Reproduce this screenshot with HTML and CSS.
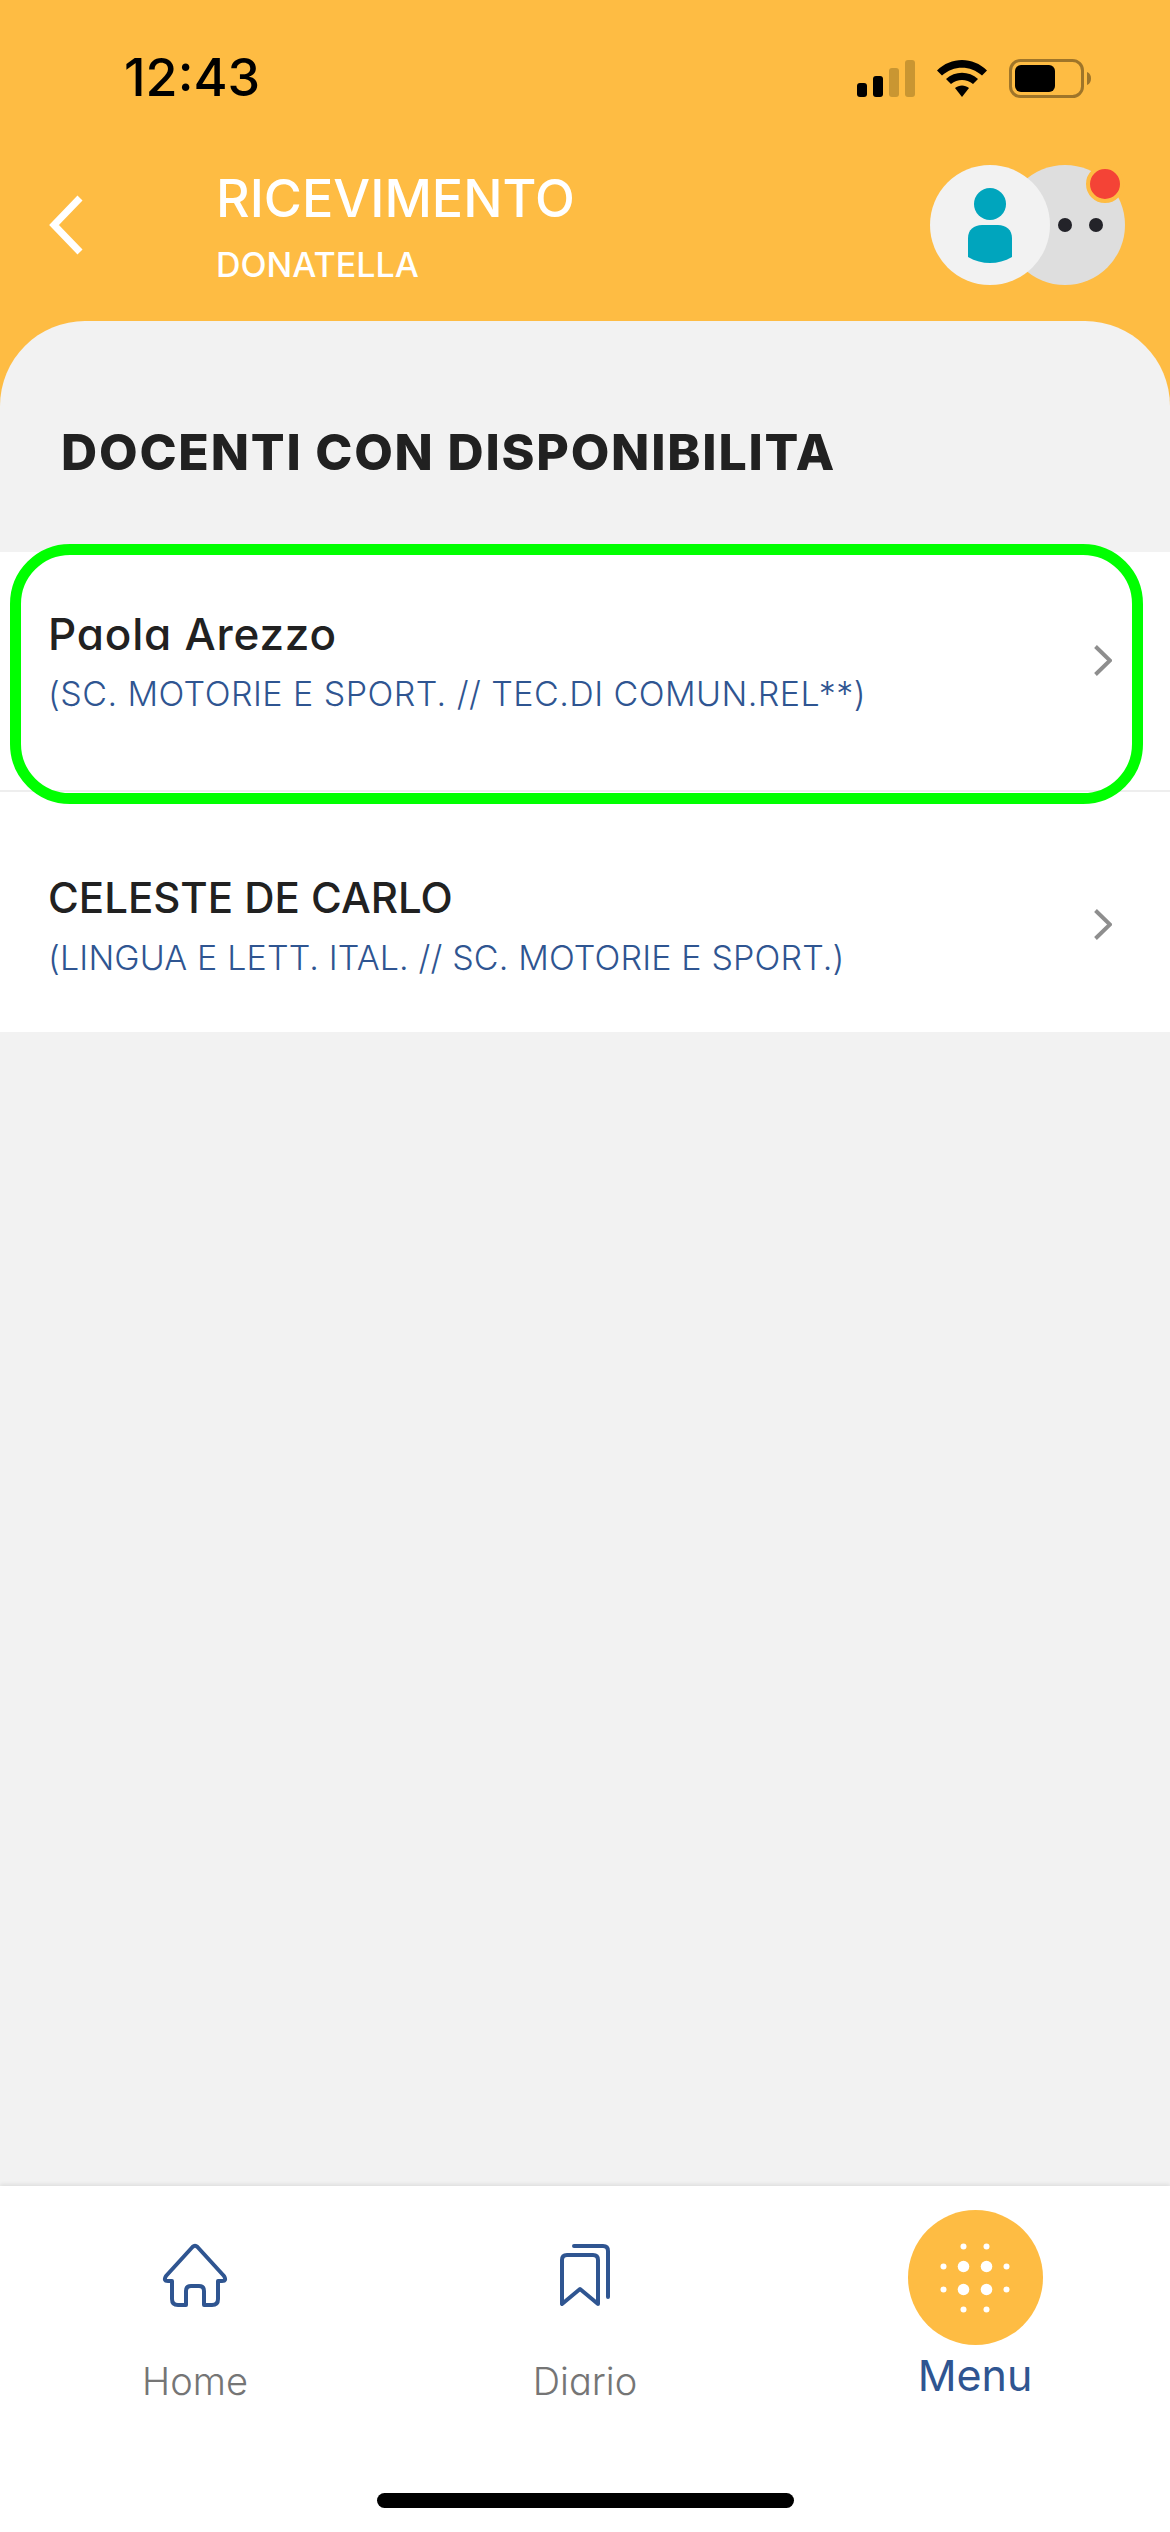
FILE: index.html
```html
<!DOCTYPE html>
<html lang="it">
<head>
    <meta charset="UTF-8">
    <meta name="viewport" content="width=device-width, initial-scale=1.0">
    <title>Ricevimento</title>
    <link rel="stylesheet" href="styles.css">
</head>
<body>
    <div class="app">
        <header class="top">
            <!-- Status bar -->
            <div class="status">
                <span class="time">12:43</span>
                <div class="status-icons">
                    <svg width="58" height="37" viewBox="0 0 58 37">
                        <rect x="0" y="23" width="10" height="14" rx="3" fill="#000"/>
                        <rect x="16" y="16" width="10" height="21" rx="3" fill="#000"/>
                        <rect x="32" y="8" width="10" height="29" rx="3" fill="#c99632"/>
                        <rect x="48" y="0" width="10" height="37" rx="3" fill="#c99632"/>
                    </svg>
                    <svg width="50" height="37" viewBox="0 0 50 37">
                        <path d="M0 10.5 C14 -3.5 36 -3.5 50 10.5 L45 15.5 C33.500 5 16.500 5 5 15.500 Z" fill="#000"/>
                        <path d="M9 19 C18 10.500 32 10.500 41 19 L36 24 C29.500 18.500 20.500 18.500 14 24 Z" fill="#000"/>
                        <path d="M18 28 C22 24.500 28 24.500 32 28 L25 37 Z" fill="#000"/>
                    </svg>
                    <svg width="82" height="39" viewBox="0 0 82 39">
                        <rect x="1.500" y="1.500" width="72" height="36" rx="10" fill="none" stroke="#9f7529" stroke-width="3"/>
                        <rect x="6" y="6" width="40" height="27" rx="6" fill="#000"/>
                        <path d="M78 13 C81 14 82 17 82 19.500 C82 22 81 25 78 26 Z" fill="#9f7529"/>
                    </svg>
                </div>
            </div>

            <div class="bar">
                <svg class="back" width="35" height="60" viewBox="0 0 35 60">
                    <path d="M32 3 L6 30 L32 57" fill="none" stroke="#fff" stroke-width="7"/>
                </svg>
                <div class="titles">
                    <h1>RICEVIMENTO</h1>
                    <p>DONATELLA</p>
                </div>
                <div class="avatars">
                    <div class="avatar avatar-user">
                        <svg width="44" height="76" viewBox="0 0 44 76">
                            <circle cx="22" cy="16" r="16" fill="#00a5bd"/>
                            <path d="M0 50 C0 42 6 37 14 37 H30 C38 37 44 42 44 50 V69 C30 77 14 77 0 69 Z" fill="#00a5bd"/>
                        </svg>
                    </div>
                    <div class="avatar avatar-more">
                        <span class="dot"></span>
                        <span class="dot"></span>
                        <span class="badge"></span>
                    </div>
                </div>
            </div>
        </header>

        <main class="sheet">
            <h2>DOCENTI CON DISPONIBILITA</h2>
            <ul class="list">
                <li class="row row-first">
                    <div class="row-text">
                        <div class="name">Paola Arezzo</div>
                        <div class="subjects">(SC. MOTORIE E SPORT. // TEC.DI COMUN.REL**)</div>
                    </div>
                    <svg class="chevron" width="18" height="31" viewBox="0 0 18 31">
                        <path d="M1.500 1.500 L16 15.500 L1.500 29.500" fill="none" stroke="#8e8e8e" stroke-width="4"/>
                    </svg>
                    <div class="focus-ring"></div>
                </li>
                <li class="row row-second">
                    <div class="row-text">
                        <div class="name">CELESTE DE CARLO</div>
                        <div class="subjects">(LINGUA E LETT. ITAL. // SC. MOTORIE E SPORT.)</div>
                    </div>
                    <svg class="chevron" width="18" height="31" viewBox="0 0 18 31">
                        <path d="M1.500 1.500 L16 15.500 L1.500 29.500" fill="none" stroke="#8e8e8e" stroke-width="4"/>
                    </svg>
                </li>
            </ul>
        </main>

        <nav class="tabs">
            <div class="tab-row">
                <div class="tab">
                    <svg class="tab-icon" width="66" height="64" viewBox="0 0 66 64">
                        <path d="M30.500 4 Q33 1.500 35.500 4 L62 33 Q65 38 60 38 H56 V56 Q56 62 50 62 H42 V48 Q42 43 37 43 H29 Q24 43 24 48 V62 H16 Q10 62 10 56 V38 H6 Q1 38 4 33 Z" fill="none" stroke="#2f5591" stroke-width="4" stroke-linejoin="round"/>
                    </svg>
                    <span class="tab-label">Home</span>
                </div>
                <div class="tab">
                    <svg class="tab-icon" width="52" height="64" viewBox="0 0 52 64">
                        <path d="M3 61 V17 Q3 12 8 12 H34 Q39 12 39 17 V61 L21 46 Z" fill="none" stroke="#2f5591" stroke-width="4" stroke-linejoin="round"/>
                        <path d="M15 3 H44 Q49 3 49 8 V54" fill="none" stroke="#2f5591" stroke-width="4" stroke-linecap="round"/>
                    </svg>
                    <span class="tab-label">Diario</span>
                </div>
                <div class="tab tab-active">
                    <div class="menu-btn">
                        <svg width="80" height="80" viewBox="-40 -40 80 80" fill="#fff">
                            <circle cx="-11.500" cy="-11.500" r="5.800"/>
                            <circle cx="11.500" cy="-11.500" r="5.800"/>
                            <circle cx="-11.500" cy="11.500" r="5.800"/>
                            <circle cx="11.500" cy="11.500" r="5.800"/>
                            <circle cx="-11.500" cy="-31.500" r="3"/>
                            <circle cx="11.500" cy="-31.500" r="3"/>
                            <circle cx="-11.500" cy="31.500" r="3"/>
                            <circle cx="11.500" cy="31.500" r="3"/>
                            <circle cx="-31.500" cy="-11.500" r="3"/>
                            <circle cx="-31.500" cy="11.500" r="3"/>
                            <circle cx="31.500" cy="-11.500" r="3"/>
                            <circle cx="31.500" cy="11.500" r="3"/>
                        </svg>
                    </div>
                    <span class="tab-label">Menu</span>
                </div>
            </div>
            <div class="home-bar"></div>
        </nav>
    </div>
</body>
</html>
```

FILE: styles.css
```css
* {
    box-sizing: border-box;
}
body {
    margin: 0;
    font-family: Inter, "Open Sans", sans-serif;
    font-feature-settings: "cv11";
}
h1, h2, p, ul {
    margin: 0;
    padding: 0;
}
.app {
    width: 1170px;
    height: 2532px;
    display: flex;
    flex-direction: column;
    background-color: #febc43;
    overflow: hidden;
}

/* header */
.top {
    height: 321px;
    flex: none;
}
.status {
    display: flex;
    justify-content: space-between;
    align-items: center;
    height: 40px;
    margin-top: 58px;
    padding: 0 79px 0 124px;
}
.time {
    font-size: 52px;
    font-weight: 500;
    line-height: 40px;
    color: #000;
}
.status-icons {
    display: flex;
    align-items: center;
    gap: 22px;
}
.bar {
    display: flex;
    align-items: flex-start;
    margin-top: 67px;
    padding: 0 45px 0 48px;
}
.back {
    margin-top: 30px;
    margin-right: 133px;
}
.titles {
    flex: 1;
    color: #fff;
    margin-top: 4px;
}
.titles h1 {
    font-size: 52px;
    font-weight: 500;
    line-height: 60px;
    margin-bottom: 14px;
}
.titles p {
    font-size: 34px;
    font-weight: 500;
    line-height: 44px;
}
.avatars {
    display: flex;
}
.avatar {
    width: 120px;
    height: 120px;
    border-radius: 50%;
    display: flex;
    flex: none;
}
.avatar-user {
    background-color: #f2f2f2;
    justify-content: center;
    padding-top: 23px;
    z-index: 1;
}
.avatar-more {
    position: relative;
    margin-left: -45px;
    background-color: #dedede;
    align-items: center;
    gap: 17px;
    padding-left: 53px;
}
.dot {
    width: 14px;
    height: 14px;
    border-radius: 50%;
    background-color: #232329;
}
.badge {
    position: absolute;
    top: 0;
    right: 1px;
    width: 38px;
    height: 38px;
    border-radius: 50%;
    background-color: #f44336;
    border: 4px solid #febc43;
}

/* content */
.sheet {
    flex: 1;
    background-color: #f2f2f2;
    border-radius: 85px 85px 0 0;
}
.sheet h2 {
    font-size: 50px;
    font-weight: 800;
    letter-spacing: 1.8px;
    line-height: 60px;
    color: #212121;
    padding: 101px 0 0 61px;
    height: 231px;
}
.list {
    list-style: none;
    background-color: #fff;
}
.row {
    position: relative;
    display: flex;
    justify-content: space-between;
    align-items: flex-start;
    height: 240px;
    padding-left: 48px;
    padding-right: 58px;
}
.row-first {
    padding-top: 52px;
    border-bottom: 2px solid #eee;
}
.row-second {
    padding-top: 76px;
}
.name {
    font-size: 42px;
    font-weight: 500;
    line-height: 60px;
    color: #212121;
}
.row-first .name {
    font-size: 44px;
    letter-spacing: 0.8px;
}
.subjects {
    font-size: 34px;
    font-weight: 300;
    letter-spacing: 0.15px;
    line-height: 60px;
    color: #2f5591;
}
.row-first .subjects {
    letter-spacing: 0.45px;
}
.chevron {
    margin-top: 41px;
}
.focus-ring {
    position: absolute;
    top: -8px;
    left: 10px;
    width: 1133px;
    height: 260px;
    border: 11px solid #00ff00;
    border-radius: 60px;
}

/* bottom nav */
.tabs {
    height: 346px;
    flex: none;
    background-color: #fff;
    box-shadow: 0 -2px 4px rgba(0, 0, 0, 0.08);
    display: flex;
    flex-direction: column;
    align-items: center;
}
.tab-row {
    display: grid;
    grid-template-columns: repeat(3, 1fr);
    width: 100%;
}
.tab {
    display: flex;
    flex-direction: column;
    align-items: center;
    padding-top: 57px;
}
.tab-icon {
    margin-bottom: 52px;
}
.tab-label {
    font-size: 38px;
    font-weight: 300;
    line-height: 44px;
    color: #757575;
}
.tab-active {
    padding-top: 24px;
}
.tab-active .tab-label {
    font-size: 43px;
    font-weight: 400;
    line-height: 50px;
    color: #2f5591;
}
.menu-btn {
    width: 135px;
    height: 135px;
    border-radius: 50%;
    background-color: #febc43;
    display: flex;
    justify-content: center;
    align-items: center;
    margin-bottom: 5px;
}
.home-bar {
    width: 417px;
    height: 15px;
    border-radius: 8px;
    background-color: #000;
    margin-top: auto;
    margin-bottom: 24px;
}
```
